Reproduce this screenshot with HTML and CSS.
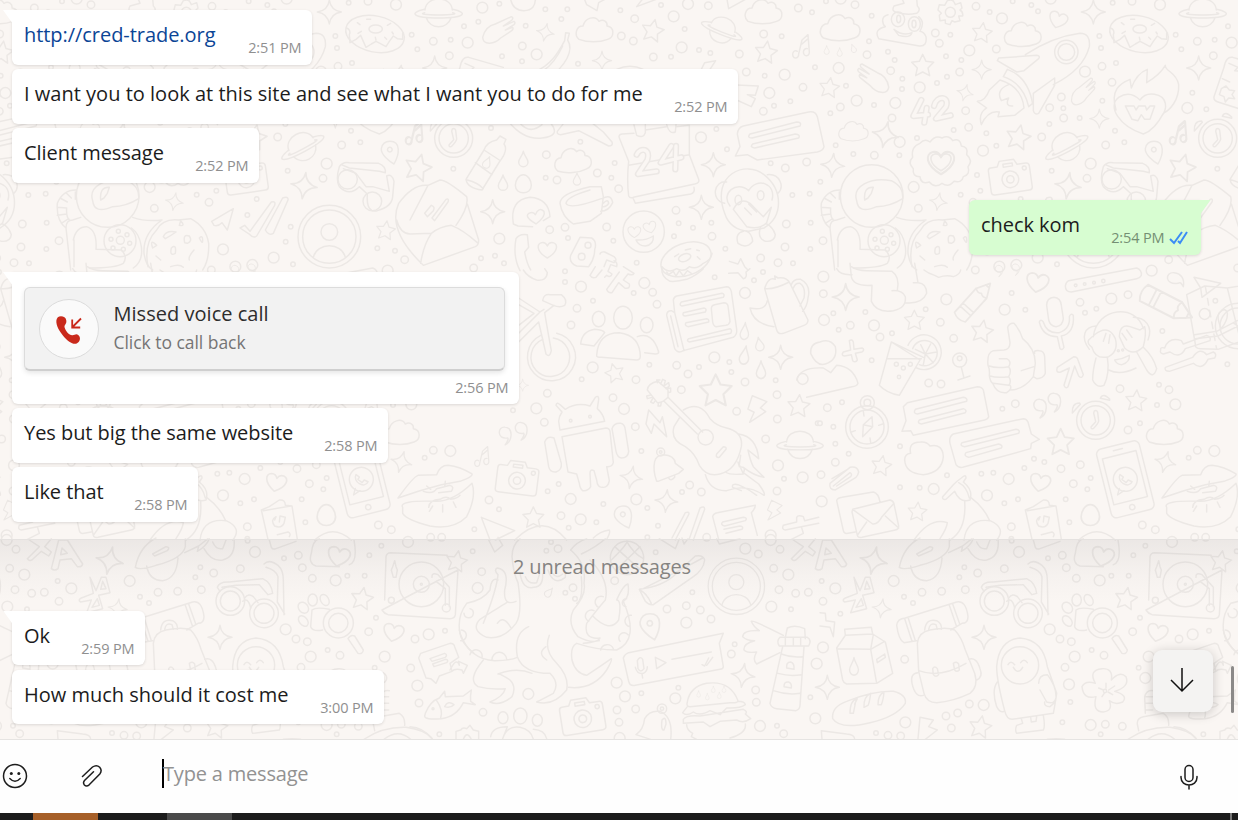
FILE: index.html
```
<!DOCTYPE html>
<html lang="en">
<head>
<meta charset="utf-8">
<title>Chat</title>
<link rel="stylesheet" href="styles.css">
</head>
<body>
<main class="chat">
<svg class="wallpaper" width="1238" height="739" viewBox="0 0 1238 739" aria-hidden="true">
<defs>
<path id="star" d="M0-35L10-14 33-11 16 6 21 29 0 18-21 29-16 6-33-11-10-14Z"/>
<path id="spark" d="M0-36Q4-5 36 0Q5 4 0 36Q-5 5-36 0Q-4-4 0-36Z"/>
<path id="cloud" d="M-46 28C-62 14-54-12-34-12C-28-36 2-46 14-26C28-34 40-24 38-12C62-8 60 22 40 28C15 38-20 38-46 28Z"/>
<path id="heart" d="M0 24C-34 4-32-18-17-22Q-5-24 0-12Q5-24 17-22C32-18 34 4 0 24Z"/>
<path id="drop" d="M0-22C3-8 14 0 14 10A14 14 0 0 1-14 10C-14 0-3-8 0-22Z"/>
<path id="egg" d="M0-28C14-28 24-10 24 4C24 34-24 34-24 4C-24-10-14-28 0-28Z"/>
<path id="saturn" d="M-41-6C-38-50 38-50 41-6M-38 16C-25 54 25 54 38 16M-42-8C-90 2-80 18 0 18S90 2 42-8M-42 2C-60 6-40 9 0 9S60 6 42 2"/>
<g id="camera"><path d="M-54-34H-34L-26-50H18L26-34H52Q62-34 62-24V38Q62 48 52 48H-52Q-62 48-62 38V-24Q-62-34-54-34ZM-16-40H12V-31H-16Z"/><circle cy="8" r="25"/><circle cy="8" r="11"/><circle cx="46" cy="-20" r="6"/></g>
<g id="clock"><circle r="57"/><circle r="44"/><path d="M-4-28Q3-32 6-24L9 2Q9 8-6 24Q-14 28-14 20L0 4-6-22ZM14-66Q22-84 42-64L42-60ZM-70-22Q-72-52-48-52L-46-48Z"/></g>
<path id="note" d="M-8 20L2-22 20-38 24 14M-8 20A9 11 0 1 1-12 12M24 12A9 11 0 1 1 18 4M2-10L18-24"/>
<path id="pin" d="M0-32C34-32 28 8 12 36C0 30-28 8-26-10Q-22-32 0-32ZM0-14A7 7 0 1 1-1-14Z"/>
<path id="bolt" d="M-20-38L26-28 10-6 28 2-14 42-6 10-26 4Z"/>
<path id="pencil" d="M-66-18H26L64 0 26 18H-66Q-78 0-66-18ZM-42-18V18M-30-18V18M26-18Q18-6 26 0Q18 8 26 18M52-6V6"/>
<path id="glove" d="M-50 18C-44-6-30-18-12-22L36-44Q44-42 38-34L12-16 44-30Q50-26 44-20L18-4 40-12Q44-6 34 0L4 20C-14 38-48 44-50 18Z"/>
<g id="profile"><circle r="94"/><circle r="80"/><circle cy="-14" r="25"/><path d="M-48 62C-36 16 36 16 48 62"/></g>
<path id="quote" d="M-8 26C0 14 4 8 0 4C-36 10-32-34-8-30C20-26 14 16-8 26Z"/>
<g id="phone"><rect x="-66" y="-106" width="132" height="212" rx="16"/><rect x="-52" y="-76" width="104" height="142"/><circle cy="86" r="8"/><circle r="36"/><path d="M-24 22L-34 40-12 32M-12-18C-28 0 2 32 18 12L8 4 0 10-10-2-4-8ZM-14-92H14"/></g>
<path id="n24" d="M680 464C690 440 724 446 712 480L684 522 740 514M784 438L752 488 814 472M798 438L796 508"/>
<path id="n42" d="M304 300L280 348 324 344M320 324L313 368M342 318C350 284 390 288 378 320L348 356 392 346"/>
<path id="rs" d="M268 11h0M406 28h0M472 28h0M454 57h0M347 77h0M631 31h0M753 15h0M824 87h0M205 65h0M162 79h0M122 119h0M276 169h0M336 184h0M504 191h0M867 150h0M901 159h0M783 170h0M1206 37h0M1115 109h0M5 104h0M22 148h0M243 384h0M511 425h0M130 506h0M407 533h0M614 489h0M604 533h0M951 448h0M919 387h0M1082 490h0M1147 585h0M1199 581h0M1202 668h0M849 683h0M792 709h0M610 722h0M474 714h0M255 767h0M213 775h0M1201 747h0M946 746h0M806 670h0M904 668h0M1064 227h0M1092 317h0M1141 304h0M1215 202h0M282 790h0M680 788h0M1149 790h0M55 278h0M97 328h0"/>
<path id="rm" d="M895 17h0M674 56h0M634 108h0M670 123h0M730 171h0M337 138h0M1061 102h0M1165 24h0M70 124h0M118 167h0M988 162h0M409 464h0M441 540h0M562 519h0M626 566h0M1009 216h0M1060 334h0M1179 262h0M1126 504h0M1190 486h0M798 631h0M590 681h0M465 682h0M419 689h0M906 709h0M1129 672h0M1125 741h0M1052 774h0M1104 788h0M191 804h0"/>
<path id="rl" d="M217 23h0M834 12h0M791 49h0M380 163h0M173 128h0M815 142h0M1124 224h0M1078 279h0M873 412h0M268 716h0M40 324h0"/>
<path id="rs2" d="M878 8h0M634 15h0M509 36h0M654 34h0M578 4h0M155 47h0M147 124h0M391 104h0M378 169h0M424 180h0M204 155h0M224 180h0M78 257h0M162 315h0M31 340h0M246 267h0M351 249h0M381 230h0M247 236h0M401 390h0M291 414h0M47 436h0M100 462h0M238 466h0M499 400h0M529 437h0M471 525h0M481 572h0M688 372h0M730 325h0M779 354h0M847 302h0M888 189h0M843 144h0M838 108h0M885 392h0M913 427h0M695 512h0M422 584h0M602 597h0M574 645h0M704 680h0M689 725h0M711 793h0M964 745h0M1017 752h0M1 545h0M18 4h0"/>
<path id="rm2" d="M105 14h0M468 19h0M936 4h0M346 99h0M358 130h0M529 147h0M141 164h0M212 212h0M419 216h0M61 321h0M216 354h0M437 332h0M446 382h0M665 411h0M731 354h0M689 323h0M724 291h0M846 199h0M876 247h0M857 435h0M801 535h0M163 466h0M295 625h0M459 607h0M1046 779h0M9 722h0"/>
<path id="rl2" d="M62-4h0M692-4h0M1020 14h0M546 55h0M448 151h0M795 215h0M56 204h0M110 302h0M226 309h0M299 262h0M239 426h0M489 452h0M281 561h0M812 491h0M501 748h0M653 773h0M538 800h0M589 795h0"/>
<path id="rs3" d="M465 4h0M465 36h0M549 92h0M671 69h0M515 328h0M718 284h0M867 291h0M958 276h0M964 306h0M1097 331h0M413 664h0M267 718h0M44 563h0M694 543h0M712 714h0M744 767h0M476 773h0M580 702h0M559 757h0M446 642h0M816 666h0M1122 626h0M914 22h0M1032 31h0M1059 6h0M309 421h0M1223 460h0M712 802h0M193 778h0M124 92h0M160 283h0"/>
<path id="rm3" d="M501 115h0M483 165h0M741 103h0M728 67h0M800 286h0M834 312h0M678 329h0M412 370h0M403 457h0M609 383h0M676 470h0M814 359h0M1005 336h0M980 424h0M1101 374h0M1102 447h0M1067 507h0M1101 663h0M839 645h0M874 666h0M453 737h0M237 690h0M70 541h0M890 802h0M62 802h0M95 802h0"/>
<path id="rl3" d="M513 50h0M703 39h0M1005 69h0M548 292h0M913 262h0M642 417h0M379 415h0M121 543h0M482 687h0M679 688h0M512 748h0M1104 586h0M1178 622h0M1178 327h0M1082 796h0M92 132h0"/>
<path id="rs4" d="M575 69h0M616 119h0M317 118h0M216 190h0M155 271h0M56 179h0M40 130h0M136 126h0M1027 183h0M829 116h0M795 128h0M547 416h0M642 566h0M673 576h0M613 594h0M520 608h0M484 611h0M240 529h0M86 551h0M46 521h0M66 397h0M240 652h0M299 653h0M381 616h0M553 700h0M594 688h0M748 757h0M812 624h0M802 658h0M737 688h0M960 460h0M1011 405h0M1017 344h0M574 806h0M40 470h0M0 460h0"/>
<path id="rm4" d="M91 166h0M180 201h0M361 157h0M401 205h0M326 339h0M363 342h0M586 401h0M780 97h0M924 74h0M900 356h0M1047 359h0M924 480h0M781 584h0M723 596h0M760 641h0M46 577h0M22 413h0M10 71h0M574 770h0M967 765h0M1006 779h0M3 614h0M466 0h0"/>
<path id="rl4" d="M379 88h0M554 119h0M162 166h0M874 86h0M12 150h0M10 20h0M566 627h0M501 676h0M341 657h0M1066 403h0M5 694h0M995 2h0"/>
<path id="rs5" d="M188 34h0M105 272h0M466 158h0M495 176h0M409 32h0M423 6h0M847 157h0M1143 208h0M974 313h0M88 583h0M694 460h0M1201 472h0M805 443h0M1101 557h0M737 37h0"/>
<path id="rm5" d="M15 297h0M215 95h0M444 26h0M489 143h0M614 122h0M771 207h0M829 197h0M871 210h0M903 237h0M964 342h0M621 510h0M627 547h0M677 507h0M219 517h0M27 489h0M1045 42h0M1091 85h0M1107 149h0M1157 160h0M1195 157h0M1110 28h0M1037 450h0M1039 487h0M1121 581h0M2 384h0"/>
<path id="rl5" d="M56 283h0M203 144h0M829 248h0M355 462h0M22 437h0M620 428h0M645 469h0M796 475h0M1006 26h0M1135 104h0M1084 200h0M1050 558h0M629 594h0M1220 371h0M1216 535h0M1082 0h0"/>
<path id="rs6" d="M433 82h0M418 112h0M684 55h0M940 46h0M976 17h0M874 107h0M926 107h0M252 170h0M279 189h0M61 221h0M815 330h0M727 547h0M751 486h0M842 583h0M168 579h0M956 383h0M960 233h0M5 123h0M575 2h0"/>
<path id="rm6" d="M473 99h0M553 86h0M727 46h0M739 83h0M769 115h0M306 157h0M365 154h0M436 149h0M720 297h0M754 305h0M852 346h0M735 382h0M856 553h0M378 528h0M413 519h0M394 564h0M448 492h0M254 358h0M9 184h0M938 275h0M204 586h0M242 588h0M907 559h0"/>
<path id="rl6" d="M597 36h0M221 123h0M46 145h0M839 121h0M689 268h0M764 350h0M747 433h0M812 555h0M256 547h0M491 495h0M976 414h0M986 350h0M1056 6h0M9 322h0"/>
<g id="tile">
<g transform="translate(410 0) scale(.33333)">
<use href="#rl" class="o3"/><use href="#rl" class="i3"/><use href="#rm" class="o2"/><use href="#rm" class="i2"/><use href="#rs" class="o1"/><use href="#rs" class="i1"/>
<use href="#saturn" x="86" y="36"/><use href="#saturn" transform="translate(937 88) rotate(22) scale(.92)"/>
<path d="M301-8Q306 32 342 32T376-8M522-6L530 14 561 32 566 8 592-6M700-6L680 20 744-4M950-8L956 26 1010-4"/>
<use href="#glove" x="268" y="94"/><use href="#spark" transform="translate(406 97) rotate(12) scale(.75)"/>
<use href="#cloud" x="553" y="90"/><use href="#cloud" x="1060" y="36"/>
<use href="#star" transform="translate(728 93) rotate(12)"/><use href="#star" transform="translate(1068 158) rotate(8)"/>
<path d="M375 214C420 198 444 160 464 122L467 98 478 100 473 120C492 150 470 196 410 240M400 212Q434 190 458 138"/>
<use href="#spark" transform="translate(576 182) scale(.8)"/><use href="#spark" x="74" y="204"/>
<use href="#note" x="1174" y="142"/>
<path d="M150 202Q156 168 176 172L280 202M150 202L120 290Q118 302 132 306L220 334M165 190L192 202 182 212 220 216M145 236l22 10M142 266l14-8 10 12 16 2-8 12 8 12-18-2-10 12-4-16-14-6z"/>
<path d="M874 208L884 188 917 182 900 208M980 255L1045 258 1036 286 1012 284 1036 296 1024 320 980 300M620 208Q660 190 700 208"/>
<use href="#clock" x="131" y="415"/><use href="#note" x="14" y="402"/>
<path d="M168 538L222 450Q230 426 260 420L270 408 288 418 282 432Q296 450 268 486L216 570Q172 564 168 538ZM196 488L246 524M222 450L268 480M172 540Q204 548 220 566"/>
<use href="#drop" transform="translate(232 486) rotate(24) scale(.8)"/><use href="#drop" x="340" y="476"/><use href="#drop" x="279" y="547"/><use href="#egg" x="340" y="552"/><use href="#drop" transform="translate(501 536) scale(.8)"/>
<path d="M297 366Q340 420 396 414T424 372M330 370Q360 404 396 374M470 358L442 394Q440 404 452 404L506 392 596 438Q610 438 606 426L580 396 548 370"/>
<use href="#cloud" transform="translate(488 482) rotate(-5)"/>
<path d="M672 375L680 406Q700 416 706 398V374M770 374Q778 404 796 396L798 374M706 390L770 380M798 380L838 376V464M672 400L636 402Q624 404 628 414L656 484Q650 540 656 588Q660 596 670 592L854 552Q870 548 866 538L838 464M656 496L838 464M670 596L676 610 842 582Q856 578 852 562"/>
<use href="#n24" class="digit-out"/><use href="#n24" class="digit-in"/>
<path d="M1000 378L1196 336Q1216 332 1222 350L1242 440Q1240 452 1222 456L1042 480 1012 464 976 468 990 440 982 402Q984 382 1000 378ZM1020 402L1160 366Q1176 366 1170 378L1026 414Q1010 414 1020 402ZM1028 432L1156 402Q1172 404 1166 414L1034 444Q1018 442 1028 432Z"/>
<use href="#spark" x="910" y="494"/><use href="#star" transform="translate(24 504) rotate(15) scale(1.2)"/>
<path d="M0 660L54 556 90 540Q110 540 170 590Q178 620 138 676M54 556Q10 550-34 610-70 690 40 796L196 740Q206 736 206 720L172 612M0 702L64 700Q90 680 124 676Q160 690 202 728M64 700Q40 736 32 790M-40 660Q-30 700 0 702M44 640L64 616Q76 620 70 632L52 650ZM66 654L108 598Q118 594 114 606L74 662Z"/>
<use href="#spark" x="248" y="635"/><use href="#spark" x="874" y="622"/>
<path d="M310 672Q298 600 360 592Q416 596 420 650L400 662M310 672L324 678 368 680M378 672Q336 646 362 638Q372 636 376 644Q386 620 402 634Q408 650 378 672Z"/>
<path d="M450 610Q450 580 540 560L574 560 580 590 574 640 540 664 490 672Q456 650 450 610ZM468 610Q470 590 540 570M468 610Q480 630 574 596M576 596Q604 580 608 608Q596 634 572 634M580 610Q594 594 596 610Q588 622 578 620"/>
<circle cx="701" cy="695" r="62"/><use href="#heart" transform="translate(673 696) scale(.7)"/><use href="#heart" transform="translate(720 682) rotate(-16) scale(.7)"/><path d="M678 720Q708 722 730 708Q732 734 706 738Q686 738 678 720Z"/>
<path d="M944 640C900 520 1010 480 1062 524C1120 570 1120 650 1062 684L1016 694Q960 690 944 640ZM944 610C900 600 912 540 950 546M1072 524C1110 520 1124 560 1104 580M960 618C930 580 980 540 1016 572C1040 530 1100 550 1086 600M970 628Q990 590 1020 610L1060 650 1084 622 1070 668Q1050 690 1010 680ZM1004 624L1024 644M1016 612L1040 636"/>
<ellipse cx="985" cy="600" rx="10" ry="14"/><ellipse cx="1052" cy="586" rx="10" ry="14"/><path d="M1000 694Q974 700 984 730Q1010 748 1028 724Q1026 700 1010 694M1052 680Q1040 714 1066 724Q1094 726 1096 704Q1088 680 1070 672"/>
<path d="M318 716Q328 700 352 704L356 742 344 756Q350 790 362 810M318 716Q308 770 330 812"/><use href="#heart" x="412" y="750"/>
<path d="M510 712L545 714Q562 724 554 750Q554 776 536 800L500 798Q476 788 482 766ZM570 762Q572 754 584 756L612 770Q624 780 612 788L590 780 582 800"/><circle cx="534" cy="736" r="9"/><circle cx="515" cy="770" r="10"/>
<ellipse cx="828" cy="778" rx="78" ry="48" transform="rotate(-20 828 778)"/><ellipse cx="824" cy="773" rx="19" ry="11" transform="rotate(-20 824 773)"/><path d="M756 800Q776 822 800 806 820 818 838 800 860 810 880 790 904 780 906 760M794 770L806 762M826 750L842 746M860 750L868 752M862 770L870 778"/>
<path d="M958 784L984 792 992 776 1004 800 1014 810"/>
</g>
<g transform="translate(820 0) scale(.33333)">
<use href="#rl2" class="o3"/><use href="#rl2" class="i3"/><use href="#rm2" class="o2"/><use href="#rm2" class="i2"/><use href="#rs2" class="o1"/><use href="#rs2" class="i1"/>
<use href="#cloud" transform="translate(60 84) scale(1.08)"/><use href="#cloud" transform="translate(608 104)"/><use href="#cloud" transform="translate(100 394) scale(.8)"/>
<use href="#drop" transform="translate(20 150) scale(.55)"/><use href="#drop" transform="translate(59 156) scale(.55)"/><use href="#drop" transform="translate(100 145) rotate(-20) scale(.55)"/>
<path d="M246-5L252 10 222 18Q212 36 234 38M204 44C178 50 190 76 196 80Q160 88 176 116L298 138Q322 140 318 110Q312 96 300 94Q316 66 296 50M292 18Q304 30 290 40Q260 46 234 38M290-4L292 18M222 88Q250 110 276 98Q270 116 236 106Z"/><ellipse cx="234" cy="58" rx="20" ry="22"/><ellipse cx="283" cy="72" rx="18" ry="22"/><ellipse cx="236" cy="57" rx="6" ry="11"/><ellipse cx="282" cy="72" rx="6" ry="11"/>
<path d="M382 2Q398-4 402 6L406 14 422 8 426 24 420 30Q430 36 428 48L416 48 420 62 404 66 396 62 390 74 376 70 376 60 360 62 358 46 364 40 354 30 358 14 374 16Z"/><circle cx="391" cy="37" r="15"/>
<use href="#star" transform="translate(486 99) rotate(8) scale(.9)"/><use href="#star" x="308" y="198"/><use href="#star" transform="translate(28 264) rotate(8) scale(.9)"/><use href="#star" transform="translate(595 413) rotate(12) scale(1.1)"/><use href="#star" transform="translate(989 692) rotate(8) scale(.85)"/>
<use href="#heart" transform="translate(714 60) rotate(18)"/><use href="#spark" x="820" y="36"/><use href="#spark" transform="translate(485 209) scale(.8)"/><use href="#spark" transform="translate(435 278) rotate(15) scale(.7)"/><use href="#spark" transform="translate(196 404) rotate(12) scale(1.1)"/><use href="#spark" transform="translate(838 356) scale(.8)"/><use href="#spark" transform="translate(744 557) rotate(8) scale(1.1)"/><use href="#spark" transform="translate(38 496) rotate(5)"/><use href="#spark" transform="translate(355 605) rotate(10) scale(.75)"/>
<ellipse cx="957" cy="102" rx="89" ry="54" transform="rotate(12 957 102)"/><ellipse cx="959" cy="87" rx="20" ry="12"/><path d="M872 84Q886 90 880 104L882 128 900 118 914 106 922 124 930 142 946 132 960 124 972 130 990 140 1000 124 1012 108 1024 116 1040 118 1040 98M904 68L912 74M906 100L916 94M932 58H944M958 112L960 120M986 112L992 118M1008 96L1012 102M1004 70L994 76"/>
<use href="#glove" transform="translate(158 239) scale(-1 1) rotate(-5)"/><use href="#glove" transform="translate(792 278) rotate(-14) scale(.85)"/>
<path d="M616 164Q700 110 780 100Q812 100 808 140Q790 210 700 254M532 182L536 174 650 166Q662 168 656 176L612 212 590 216ZM704 234L640 280V332Q644 346 656 340L704 256Z"/><circle cx="739" cy="156" r="35"/><circle cx="739" cy="156" r="25"/>
<path d="M562 208L550 230Q610 250 626 320L638 310M562 208Q624 230 638 312M540 240Q606 260 612 324L584 346 534 350 538 336Q504 330 484 374Q474 340 500 324L472 304Q496 304 508 270ZM566 254Q526 270 544 302L566 294Q554 320 578 318"/>
<use href="#n42" class="digit-out"/><use href="#n42" class="digit-in"/>
<path d="M888 330C870 270 900 250 930 238L934 264Q950 220 982 208L980 248Q1020 224 1036 196C1034 214 1070 216 1076 254C1078 300 1050 330 1030 340Q1004 390 970 402C900 380 860 320 896 292Q930 270 960 300C980 270 1030 280 1036 310Q1040 330 1024 350M916 318H942L948 330 956 318H976L980 330 990 318H1004L990 358 974 358 964 344 954 362 936 358Z"/>
<path d="M300 430Q314 414 330 426Q346 404 366 414Q386 404 398 422Q420 412 424 438Q446 440 440 464Q460 482 444 500Q452 524 430 530Q426 550 402 544Q386 564 366 550Q344 566 328 546Q302 554 300 530Q276 530 280 506Q262 488 278 472Q272 440 300 430Z"/><use href="#heart" transform="translate(363 488) scale(1.45)"/><use href="#heart" transform="translate(363 486) scale(1.1)"/>
<use href="#saturn" transform="translate(738 438) rotate(-28)"/><use href="#camera" transform="translate(570 530) rotate(-8)"/><use href="#pin" transform="translate(1002 456)"/><use href="#note" transform="translate(1074 400)"/>
<path d="M850 500Q860 484 880 488L968 490Q990 498 988 518L970 514 880 504 856 494M850 500Q838 540 850 560Q880 590 910 560L934 582Q930 640 964 632Q1008 620 1010 590L1014 544Q1008 520 992 528L1000 574 950 560 930 560 900 520 862 506"/><circle cx="875" cy="538" r="29"/><circle cx="949" cy="604" r="28"/>
<circle cx="155" cy="588" r="94"/><path d="M110 602C96 560 150 530 214 542C240 556 250 570 248 596Q210 620 170 620Q114 644 110 602ZM134 600Q130 560 160 562L154 580 144 594ZM60 570Q20 570 4 610Q0 660 30 684L44 810M30 578L46 594M12 594L34 606M4 622L32 624M4 646L32 642M16 670L38 656M58 576L58 598M32 624Q30 650 40 660M30 684Q30 660 50 660L74 652M52 720Q60 680 92 680Q124 690 120 748L196 750Q216 770 202 790 180 804 100 804M54 720V800M230 652Q270 666 318 660Q260 700 264 760Q270 800 290 810M226 684Q250 700 256 740M256 740Q262 784 232 804"/><circle cx="192" cy="722" r="48"/><circle cx="193" cy="721" r="12"/>
<path d="M302 690Q320 656 366 660L404 656Q450 680 458 730Q460 780 440 810M276 800Q262 730 302 690M322 710Q330 690 360 696Q346 706 328 716ZM374 662Q390 680 370 676ZM386 728Q380 700 400 708Q410 724 394 730ZM430 714Q440 704 440 720T430 714ZM290 744Q280 714 302 736ZM414 750Q396 770 400 780M346 744Q362 730 358 760Q340 770 346 744ZM300 768L314 780M344 800Q370 790 382 802"/>
<circle cx="165" cy="718" r="6"/><circle cx="187" cy="694" r="6"/><circle cx="213" cy="704" r="6"/><circle cx="221" cy="730" r="6"/><circle cx="171" cy="744" r="6"/><circle cx="202" cy="748" r="6"/>
<path d="M467 664L532 626 514 690 498 668Q486 680 474 676ZM552 684L566 676 582 694 646 606Q660 602 656 616L602 708Q592 716 582 704ZM628 690L680 594Q698 588 696 600L652 700Q638 708 628 690Z"/>
<use href="#profile" transform="translate(820 710)"/>
</g>
<g transform="translate(410 270) scale(.33333)">
<use href="#rl3" class="o3"/><use href="#rl3" class="i3"/><use href="#rm3" class="o2"/><use href="#rm3" class="i2"/><use href="#rs3" class="o1"/><use href="#rs3" class="i1"/>
<path d="M340 0Q354 22 380 30Q410 34 412 8L404-4M556-10L540 16Q546 26 558 22L576 0M612-28Q624-22 620-10L602-16 594 4 606 12Q602 24 590 16L584 22 M628 6L590 58Q594 70 606 68L626 38 644 54Q662 58 658 42L640 30 654 12Q668 18 672 10L640-10"/>
<path d="M398 92Q400 72 420 74L454 74Q474 90 464 106Q450 114 430 106ZM432 106L404 128Q416 200 424 242Q420 264 408 252L386 156 326 216M326 84L390 126 326 190M326 104L372 130 326 166M390 126L402 118"/><path d="M392 196A72 72 0 1 0 440 190M398 208A58 58 0 1 0 430 204"/>
<ellipse cx="566" cy="147" rx="19" ry="23"/><ellipse cx="639" cy="143" rx="28" ry="34"/><ellipse cx="710" cy="165" rx="19" ry="23"/><path d="M560 256Q564 188 628 188Q690 196 691 260Q690 270 680 270L574 262Q558 262 560 256ZM552 228L512 222Q516 184 554 178Q580 180 584 188ZM682 200Q728 184 746 246Q746 252 736 252L704 248"/>
<path d="M800 78L950 50Q960 50 964 64L980 178Q982 194 970 202L820 242Q804 252 794 236L770 136Q770 122 784 122L794 128M794 128L790 90Q792 80 800 78M794 128L822 242M782 138L804 230M814 96L936 70Q946 72 940 82L816 108Q806 106 814 96ZM820 128L882 114Q892 116 886 126L826 138Q816 138 820 128ZM828 158L890 146Q898 148 896 156L834 170Q822 166 828 158ZM836 206L960 176Q968 180 962 190L838 216Q828 212 836 206ZM914 104L942 98Q952 98 954 108L960 154Q958 164 948 166L918 170Q910 168 908 156L904 116Q904 106 914 104Z"/>
<path d="M1064 56Q1074 20 1096 28L1094 18 1104 24Q1130 20 1140 40L1194 150Q1194 162 1182 166L1120 190Q1104 194 1100 180ZM1064 56Q1090 60 1138 36M1072 92Q1066 124 1020 114Q1030 162 1092 170M1144 44Q1150 26 1172 28Q1204 44 1194 84Q1192 108 1178 124M1150 54Q1156 38 1170 40Q1188 52 1182 84L1170 108"/>
<use href="#drop" transform="translate(1004 182) rotate(5) scale(.9 1.1)"/><use href="#drop" transform="translate(1048 221) rotate(-10) scale(.9)"/><use href="#drop" transform="translate(1004 254) rotate(10) scale(1 1.2)"/><use href="#drop" transform="translate(1053 298) scale(1 1.15)"/>
<use href="#spark" transform="translate(1112 262)"/><use href="#spark" transform="translate(338 346) scale(.5)"/><use href="#spark" transform="translate(664 622) rotate(10) scale(.95)"/><use href="#spark" transform="translate(769 693) rotate(5) scale(.95)"/>
<use href="#star" transform="translate(614 310) rotate(-15) scale(.85)"/><use href="#star" transform="translate(917 364) scale(1.45)"/><use href="#star" transform="translate(1166 409) rotate(5)"/><use href="#star" transform="translate(370 744) scale(.95)"/><path d="M956 10L984 8 1000 26Q1012 24 1008 6L1020-4"/>
<path d="M446 454Q446 440 456 426L438 406Q440 394 450 404L466 418Q500 396 540 408L556 382Q566 374 566 388L562 416Q580 432 584 454L450 480ZM456 500L588 474Q598 474 600 484L610 578Q606 592 590 590L598 632Q594 654 578 652Q562 654 560 630L552 602Q540 596 540 610L542 650Q534 664 518 662Q510 656 508 640L500 612 474 606ZM404 516Q412 496 432 504L454 580Q456 600 438 606Q420 608 416 590ZM606 476Q612 458 632 460Q644 462 646 480L656 544Q654 564 634 564Q622 562 618 544Z"/><circle cx="482" cy="452" r="4"/><circle cx="540" cy="440" r="4"/>
<use href="#quote" transform="translate(293 500) scale(.95)"/><use href="#quote" transform="translate(341 486) scale(.95)"/>
<use href="#note" transform="translate(216 562) scale(.85)"/><use href="#camera" transform="translate(322 624) rotate(7)"/>
<path d="M716 420L750 458 757 440 770 500 732 462 724 490 708 462Z"/><use href="#bolt" transform="translate(1040 418) rotate(10)"/><use href="#bolt" transform="translate(1092 722) rotate(15) scale(.75)"/>
<path d="M712 360Q714 340 744 334L774 360V382Q756 400 742 398ZM742 338L740 330 750 330M752 342L758 328 766 332 762 348 776 338 778 348 768 356 782 354 782 366 774 368M720 376L710 378 712 386 726 382M728 386L722 396 730 400 736 392M746 398L744 408 752 408 754 396M774 382L878 486M762 394L862 492M820 420Q870 390 900 446Q920 468 950 474Q1000 486 994 530Q980 600 930 612Q890 622 868 586Q856 550 826 530Q780 510 792 470L808 444M886 614Q900 664 950 662Q1010 640 1062 676Q1068 672 1046 642L1000 608Q1010 590 988 590L984 576M986 492Q1040 500 1046 566L1014 540Q1020 570 1030 590L1062 622Q1030 616 1000 592M946 606Q960 616 1000 612L988 584 992 556M994 662L968 652Q964 640 984 644Q1010 654 1040 676M920 552L940 530Q950 530 948 538L928 562Q916 564 920 552Z"/><circle cx="887" cy="502" r="23"/>
<path d="M740 634Q728 600 734 574Q738 556 760 554Q794 556 796 580L820 598 806 610 744 634ZM776 624Q782 636 794 622L794 616"/><circle cx="752" cy="546" r="12"/><circle cx="752" cy="546" r="4"/>
<use href="#saturn" transform="translate(1170 522) scale(.98)"/>
<path d="M-36 684Q10 620 24 616L80 614Q90 586 114 586Q150 590 186 612Q190 620 150 634L94 644Q30 660-36 684ZM-22 712Q-36 690 80 694Q130 694 186 640Q200 680 170 740Q130 780 60 768Q-10 750-22 730ZM40 664Q70 674 80 656L120 646Q134 650 124 664L86 668M56 712Q58 690 90 688Q110 676 122 688Q142 686 150 676M50 648L62 658M106 634L104 650M68 708L58 724M98 704V726M130 696L138 712"/>
<path d="M38 74L92 48 160 54 230 42M38 74L64 222Q62 236 80 236L132 238 240 200Q250 190 246 180L226 60M62 194L128 184 240 126M64 206L132 198 242 144M160 54L196 198M180 160L240 200M142 176Q126 140 136 128Q154 110 160 130Q162 150 142 176Z"/><path class="dash" d="M94 50L128 238"/>
<use href="#pin" transform="translate(640 740) rotate(-8)"/>
<path d="M214 742L314 782 256 810M214 742L240 810M314 810Q400 724 470 810M550 804Q570 784 598 780Q602 788 590 808M786 804L826 728Q840 724 836 734L796 810M838 806L870 714Q884 706 884 718L850 810M908 740Q910 730 922 728L1036 706Q1036 716 1024 728L1042 796M908 740L926 808M938 756L1000 742Q1014 744 1006 752L944 768Q930 764 938 756ZM942 778L990 768Q1002 770 996 778L948 790M1120 766L1160 756 1160 742Q1164 734 1180 740L1184 752 1226 742M1120 766Q1114 778 1126 780L1174 770 1180 790 1144 808M1174 770L1226 760"/>
<path d="M756-8Q752 20 780 34Q800 36 830 28 860 16 880-4M770 6L776 14 790 4 798 18 808 2 820 18 832 2 844 10"/>
<path d="M60 22L140 40 84 82 80 54Z"/><circle cx="192" cy="168" r="68"/><circle cx="192" cy="168" r="54"/>
</g>
<g transform="translate(820 270) scale(.33333)">
<use href="#rl4" class="o3"/><use href="#rl4" class="i3"/><use href="#rm4" class="o2"/><use href="#rm4" class="i2"/><use href="#rs4" class="o1"/><use href="#rs4" class="i1"/>
<path d="M90-20L94 20Q100 50 156 46L154 94Q170 130 220 122Q260 114 256 80Q248 60 216 62M232 60Q240 20 216 4L140 2Q110 2 94-10M284-20L294 38Q320 40 320 70Q306 104 254 98M280 38H294M50-4Q60 16 96 14M312 0Q324 10 344 16L356 22Q380 14 400 20 420 14 422 0"/>
<use href="#spark" transform="translate(77 81) scale(1.12)"/><path d="M88 212Q96 206 100 216L102 238 126 234Q136 238 126 246L106 250 112 270Q106 280 98 272L94 254 74 258Q62 256 70 246L92 240Z"/>
<use href="#star" transform="translate(283 152) scale(.9)"/><use href="#star" transform="translate(486 185) rotate(10)"/><use href="#star" transform="translate(184 588) rotate(10) scale(.9)"/><use href="#star" transform="translate(292 726) rotate(5) scale(.85)"/><use href="#star" transform="translate(722 518) scale(1.2)"/><use href="#star" transform="translate(948 393) rotate(5) scale(.95)"/>
<use href="#pencil" transform="translate(466 90) rotate(-48) scale(1.05 1.2)"/><use href="#pencil" transform="translate(1045 106) rotate(27) scale(1.25 1.5)"/>
<path d="M0 216Q30 204 46 230Q54 270 16 282Q-10 290-28 250Q-30 220 0 216ZM-70 330Q-60 290 10 294L32 308 50 286Q100 290 114 340Q110 350 96 350L-40 382"/>
<path d="M214 216L178 346Q200 370 238 376L300 270ZM214 216L310 262M200 266H304M264 226A52 52 0 1 1 290 294M278 236A38 38 0 1 1 298 284M316 252L302 224M316 252L332 222M316 252L350 246M316 252L340 278M316 252L310 284M316 252L286 238"/><circle cx="229" cy="283" r="6"/><circle cx="250" cy="294" r="6"/><circle cx="271" cy="283" r="6"/><circle cx="237" cy="321" r="5"/>
<circle cx="419" cy="270" r="21"/><circle cx="419" cy="265" r="7"/><path d="M424 292L432 324M414 330L450 318"/>
<path d="M563 172Q568 158 582 160Q600 180 608 206Q646 236 646 280L640 320Q610 360 570 360M563 172L570 218Q570 238 552 240L520 242Q500 248 504 286Q510 300 508 316Q510 334 518 340Q530 372 560 368Q578 356 570 346M538 266H560Q576 274 566 290 528 296 508 288M566 290Q576 302 566 320 530 324 510 318M566 320Q576 334 566 346L520 340M604 302L642 290M644 250Q640 240 658 242Q672 242 674 260L676 310Q670 326 650 326L640 320"/>
<path d="M680 106Q680 84 702 82Q722 84 724 106L730 146Q728 168 708 170Q690 168 686 150ZM658 156Q662 146 670 156Q680 192 718 188Q752 176 748 140Q752 128 760 136Q764 190 724 198L732 232Q728 242 720 236L712 200Q668 200 658 156Z"/>
<path d="M712 292L762 260Q772 260 774 270L790 314Q786 328 776 318L764 288 744 350Q736 358 732 346L748 294 722 306Q706 310 712 292Z"/>
<path d="M820 200C830 110 950 100 970 176M940 142C976 142 1000 170 984 210M828 168C794 170 780 200 808 238M806 210Q826 190 840 184Q870 170 886 206Q896 244 866 260Q826 270 816 232Q800 220 806 210ZM850 214L858 190M866 220L870 194M898 200Q900 160 930 170L960 180 974 170Q980 190 970 230Q940 260 914 234ZM920 180L936 202M906 190L920 210M828 264Q818 300 818 330Q830 356 852 346Q870 310 862 262M866 300Q900 318 948 294M950 246L980 300Q1000 330 1010 296Q1000 260 970 232M884 270Q906 268 928 256Q930 276 906 284Q890 284 884 270Z"/><circle cx="895" cy="242" r="3"/><circle cx="908" cy="240" r="3"/>
<path d="M746 32L950-6Q966 0 964 16Q960 24 950 26L754 66Q736 66 736 48Q738 36 746 32Z"/><circle cx="767" cy="46" r="4"/><circle cx="794" cy="42" r="4"/><circle cx="822" cy="38" r="4"/><circle cx="850" cy="33" r="5"/><use href="#heart" transform="translate(652 38) rotate(10) scale(1.2)"/><use href="#quote" transform="translate(542 4) scale(.6)"/><use href="#quote" transform="translate(592 0) scale(.6)"/><path d="M1090 50C1084 38 1080 36 1074 40C1034 46 1034 6 1062 8C1086 10 1094 30 1090 50Z"/>
<path d="M1022 240Q1020 230 1034 234Q1046 200 1084 212L1090 222 1160 196Q1174 200 1170 212L1096 236Q1080 268 1050 246L1030 252Q1018 250 1022 240ZM1036 292L1118 262Q1140 230 1160 254L1180 246Q1192 252 1184 264L1164 268Q1146 304 1120 280L1048 304Q1032 304 1036 292Z"/>
<circle cx="141" cy="471" r="64"/><circle cx="141" cy="471" r="51"/><circle cx="142" cy="398" r="21"/><circle cx="142" cy="398" r="10"/><path d="M156 440L158 470 128 500 130 464ZM130 464L158 470M130 424L132 438M150 504L152 518M94 486L106 482M176 466L188 462"/>
<path d="M262 398L472 350Q486 350 490 360L506 440Q504 448 494 450L280 496 272 482 246 484 258 452 250 410ZM286 418L430 382Q444 384 440 394L292 432Q278 430 286 418ZM298 450L430 416Q442 420 436 428L304 462Q290 460 298 450Z"/>
<path d="M400 492L610 446Q620 446 624 456L634 492 658 508 634 520 632 536 428 592Q414 594 408 584L390 520Q386 500 400 492ZM426 518L588 478Q602 480 596 490L434 530Q418 528 426 518ZM438 548L536 522Q550 526 544 534L446 562Q430 558 438 548Z"/>
<use href="#quote" transform="translate(668 418)"/><use href="#quote" transform="translate(711 400)"/><use href="#clock" transform="translate(827 451)"/>
<path d="M272 550Q264 516 302 516Q320 514 330 528Q368 520 370 560Q366 608 310 614Q256 610 254 570Q254 552 272 550Z"/><use href="#cloud" transform="translate(1034 488)"/><use href="#heart" transform="translate(660 638) rotate(12) scale(1.1)"/><use href="#egg" transform="translate(811 736) scale(1.15)"/>
<path d="M30 640L90 592Q112 588 116 606Q114 616 108 622L46 660Q26 660 30 640ZM40 648L90 608Q98 612 92 620L50 648M36 626L80 600"/>
<path d="M50 692Q52 684 66 682L160 666Q176 670 180 696M50 692L70 782Q72 792 84 790L106 786M98 718L210 690Q220 692 222 702L236 768Q236 778 226 780L126 802Q114 804 112 796L96 726ZM98 718L158 762Q174 764 186 740L222 700M112 796L140 756M236 774L196 738"/>
<use href="#phone" transform="translate(916 628) rotate(-14)"/><use href="#spark" transform="translate(1036 576) rotate(15) scale(.9)"/>
<path d="M368 680L400 644Q410 634 424 624Q438 610 438 624L430 636Q460 660 450 690Q420 700 404 664L378 688Q366 690 368 680ZM416 638Q440 650 448 684M434 694Q440 780 390 810M452 682Q490 710 508 750M282 810Q330 740 382 758Q380 776 360 806M432 810Q440 744 510 752Q560 774 530 810M616 720L640 710 670 690Q688 688 688 706L708 708 724 808M616 720L636 808M622 722L704 708M656 750L660 740Q642 750 656 768Q676 776 684 760L688 742 672 738 670 756M664 794L696 786Q706 790 700 800M776 810Q830 760 886 810"/>
</g>
<g transform="translate(410 540) scale(.33333)">
<use href="#rl5" class="o3"/><use href="#rl5" class="i3"/><use href="#rm5" class="o2"/><use href="#rm5" class="i2"/><use href="#rs5" class="o1"/><use href="#rs5" class="i1"/>
<path d="M-76 180L-72 50Q-70 38-58 38L112 46M144 90L136 224Q134 236 120 236L-66 224Q-78 220-84 210ZM-46 62L-42 80-38 90-42 112-50 112-56 90-52 80ZM66 112Q64 96 84 104L118 142V200M78 124L106 146V196"/><circle cx="34" cy="133" r="67"/><circle cx="34" cy="133" r="24"/><circle cx="34" cy="133" r="3"/><circle cx="109" cy="204" r="12"/><circle cx="-56" cy="181" r="9"/><use href="#star" transform="translate(140 65) rotate(10) scale(.95)"/>
<path d="M236 0L254 36 278 16 264-8M306 50Q306 16 330-4M306 50Q310 100 324 128Q338 220 318 250Q280 300 230 292Q180 270 210 238Q270 200 290 188M318 184Q280 200 284 150Q300 90 262 84Q250 90 264 104Q260 150 220 250M264 120Q244 110 240 150Q220 180 170 190Q140 230 150 280Q180 360 254 362Q300 362 322 352M482 30Q530 70 522 130 530 164 490 210Q470 250 504 290Q540 310 568 302M514 110Q520 180 500 190M540 60Q600 120 586 180Q560 210 530 250Q520 300 570 294Q566 306 520 310M548 228Q600 280 626 240Q636 180 620 180Q640 134 654 132Q660 170 640 184Q690 300 620 330Q560 330 500 310Q480 320 486 360Q496 400 530 406Q570 380 604 356Q608 360 590 390Q550 450 476 442M356 260Q310 280 322 350Q340 400 420 400Q450 430 430 460 400 476 380 486Q430 500 470 450Q478 410 440 370Q400 330 418 286M220 360Q170 420 204 440Q240 450 286 446Q280 470 240 486Q270 500 306 470Q320 440 300 420 270 400 264 402Q320 380 366 400M162 220A14 14 0 1 0 180 206M152 302A15 15 0 1 0 154 270M180 344A18 18 0 0 1 216 352M246 360A22 22 0 0 1 290 358M572 330A20 20 0 0 1 610 326M630 304A14 14 0 0 1 654 284M660 260A15 15 0 0 1 664 226M648 200A12 12 0 0 1 650 176M536 244A15 15 0 0 1 552 212M566 202A15 15 0 0 1 580 170M262 250Q280 224 302 262M410 360Q380 340 408 320"/>
<path d="M330 100Q338 150 372 142Q400 140 398 102M346 110Q356 134 380 128L388 104M414 90Q430 140 466 112V94M428 100Q440 118 458 102M482 30Q500 6 530-4M514 42Q560 20 586-4"/><circle cx="651" cy="54" r="50"/><path d="M614 20L690 88M690 20L616 92M604 60Q646 20 652 4M650 4Q670 40 700 56M626 90Q644 70 660 104"/>
<use href="#drop" transform="translate(418 156) rotate(40) scale(.7)"/>
<path d="M688 148Q760 140 800 100L856 48Q880 44 884 60Q880 90 850 110L730 194Q716 196 706 184ZM690 150Q710 160 724 190M700 146L826 82 878 54"/>
<g transform="translate(979 139) scale(.9)"><use href="#profile"/></g><use href="#pin" transform="translate(720 258) scale(1.15)"/>
<path d="M1024 244Q1030 240 1120 286M1024 244Q1030 260 1048 272Q1000 270 998 290Q1010 302 1034 302Q1000 310 1002 330Q1012 340 1040 336Q1026 360 1040 372L1110 338"/>
<path d="M1126 292L1132 264Q1154 252 1184 266L1186 296M1110 292H1192Q1206 300 1196 318H1108Q1098 304 1110 292ZM1126 292V318M1150 294V318M1172 294V318M1118 320L1080 490Q1084 504 1100 506L1158 512Q1170 508 1170 496L1182 320M1114 342Q1144 354 1178 350M1104 400Q1140 410 1174 404M1090 452Q1130 466 1170 460M1130 384Q1128 366 1142 366Q1154 370 1152 388ZM1122 440Q1122 424 1136 426Q1146 430 1144 444Z"/>
<path d="M656 338L940 280 928 310 940 380Q940 386 930 388L676 436Q660 440 656 424L640 354Q644 342 656 338ZM682 362Q690 346 698 358L702 386Q692 400 684 386ZM676 382Q682 404 700 400Q712 394 712 380M696 402L698 414M736 352L768 368 740 386ZM786 358L904 336M876 374L884 378 896 354M890 376L908 352"/>
<use href="#spark" transform="translate(999 406) rotate(8)"/><path d="M32 340L120 310Q132 310 134 320L146 352 120 370 126 394 88 408 78 430 62 416 48 414 26 354ZM60 356L104 340Q114 344 106 352L66 364ZM68 372L106 358Q118 360 110 368L72 380ZM120 390Q140 350 148 376L146 364 172 376 160 400 156 390Q134 384 126 394"/>
<path d="M46 520Q60 484 88 474L104 454 106 470 160 468 184 450Q180 470 182 484L196 494 160 488Q140 530 94 536Q44 540 44 528ZM80 482Q100 510 92 534M104 500Q114 480 132 494 120 506 104 500Z"/><circle cx="69" cy="506" r="3"/>
<use href="#camera" transform="translate(517 528) rotate(-9) scale(1.05)"/>
<ellipse cx="279" cy="533" rx="15" ry="18"/><ellipse cx="331" cy="528" rx="20" ry="24"/><ellipse cx="382" cy="541" rx="15" ry="18"/><path d="M242 590Q246 560 292 560L278 596M278 596Q290 556 330 562Q364 570 370 598M370 568Q404 570 410 596M138 596L138 574 152 570Q158 560 170 566L180 556 190 570 206 574 206 598M160 598Q170 570 184 598M0 560Q40 562 66 596"/>
<path d="M678 584Q700 570 704 536Q718 510 750 514Q790 530 782 598M678 584L722 598M756 540Q768 526 768 552L762 570Q752 572 756 540Z"/><circle cx="756" cy="506" r="14"/><circle cx="756" cy="506" r="5"/>
<path d="M832 486Q840 440 890 430Q960 420 984 482Q984 490 960 488L840 500Q828 500 832 486ZM832 500L818 518Q830 530 850 516Q870 530 900 512L930 524 950 504Q990 506 1006 494 1004 484 984 484M820 538Q830 524 870 528L1000 508Q1014 514 1006 522L1022 536Q1000 552 980 540L930 544 900 560 880 546 820 550ZM830 554Q830 570 848 580L844 590 860 598M1006 552Q1010 580 960 594"/><use href="#drop" transform="translate(866 462) scale(.4)"/><use href="#drop" transform="translate(892 470) scale(.4)"/><use href="#drop" transform="translate(910 448) scale(.4)"/><use href="#drop" transform="translate(928 466) scale(.4)"/><use href="#drop" transform="translate(942 448) scale(.4)"/>
<path d="M748-4L796 26 808-4M816-6L822 12 834-4M920-4L928 12 990-4M1150 0L1180 20 1144 56Q1150 66 1160 58L1186 34 1208 48 1216 36 1196 20 1216-4"/>
</g>
<g transform="translate(820 540) scale(.33333)">
<use href="#rl6" class="o3"/><use href="#rl6" class="i3"/><use href="#rm6" class="o2"/><use href="#rm6" class="i2"/><use href="#rs6" class="o1"/><use href="#rs6" class="i1"/>
<path d="M-14 86L8 0 34 0 80 72Q78 82 64 80L46 56 12 60 6 86Q-4 94-14 86ZM18 24L34 40 14 44Z"/>
<use href="#spark" transform="translate(161 62) rotate(12) scale(1.15)"/><use href="#spark" transform="translate(185 205) rotate(8) scale(.8)"/><use href="#spark" transform="translate(492 292)"/><use href="#spark" transform="translate(22 442)"/>
<path d="M238 82Q250 20 300-6M238 82Q250 92 300 76Q380 56 388 20V-4M290 42L330 20Q344 20 334 32L296 48ZM272 78Q280 122 320 122Q362 116 366 54M386 38L428 18 456-4M428 18L424 34Q450 20 460-4M444 26Q466 66 500 60Q540 50 534-4M470 6Q480 30 500 26L510 0M640 0L646 22Q650 30 660 26L720 4M766 40Q770 0 790-4M766 40Q756 70 780 78L850 80M894 0Q906 66 880 74"/><use href="#heart" transform="translate(848 50) rotate(12) scale(1.2)"/>
<path d="M102 112L120 152 136 112H150L162 158 128 166 140 206 92 218 106 180 74 186Q64 180 76 174L112 160ZM140 124L150 146 134 148ZM124 176L130 196 108 202Z"/>
<path d="M484 142Q490 124 520 126L620 116Q646 128 650 160L636 164 610 134 540 136 498 142M624 72Q640 56 666 76Q682 90 682 120L684 224M630 82Q660 90 666 110L664 186M484 142L492 154M566 174Q578 158 592 170L606 188M560 184Q576 170 584 204M664 186L686 222"/><circle cx="523" cy="183" r="43"/><circle cx="523" cy="183" r="30"/><circle cx="624" cy="220" r="43"/><circle cx="624" cy="220" r="30"/>
<path d="M0 218L16 220 18 242 44 246 40 290 30 262 0 258"/>
<ellipse cx="770" cy="180" rx="14" ry="18"/><ellipse cx="806" cy="180" rx="12" ry="18" transform="rotate(-30 806 180)"/><ellipse cx="742" cy="203" rx="14" ry="18" transform="rotate(-40 742 203)"/><ellipse cx="742" cy="243" rx="12" ry="18" transform="rotate(-40 742 243)"/><path d="M820 208Q780 200 768 210L764 260Q770 276 800 270M876 296Q884 282 896 288L922 330Q920 344 906 340Z"/><circle cx="847" cy="249" r="45"/><circle cx="847" cy="249" r="29"/>
<use href="#star" transform="translate(918 177) rotate(10)"/><use href="#star" transform="translate(481 562) rotate(10)"/><use href="#heart" transform="translate(1012 278) rotate(12) scale(1.1)"/>
<path d="M50 324L76 286 74 268 154 262 158 282 196 306 218 400 170 430 80 432Q70 428 68 420ZM50 326L152 328 194 304M152 328L170 430M76 286L158 282M152 328L160 284M170 358L194 342 196 352 172 368Z"/><use href="#drop" transform="translate(102 378) scale(.95 1.15)"/>
<path d="M230 256Q232 236 256 234L410 186Q438 180 444 230Q444 250 426 250L392 270M230 256Q236 300 252 308L290 302M254 236L276 304M264 232L286 302M388 196L410 260M398 192L420 254M314 270Q318 234 350 242Q366 250 364 268M326 268Q330 246 348 254L352 268M292 310Q296 276 330 270Q380 260 404 270Q424 290 436 330L464 400Q476 440 450 460Q400 484 350 488Q320 488 312 460L296 394ZM296 392Q360 416 438 370M338 386Q344 376 352 386L356 404Q348 414 340 404ZM400 370Q410 362 416 372L418 390Q410 398 404 390ZM446 358Q470 350 480 386Q490 410 470 420M294 398Q270 400 276 430Q286 474 310 466"/>
<path d="M38 536Q34 500 80 484Q160 452 220 454Q260 464 256 490Q230 530 150 548Q60 570 38 536ZM90 520Q90 480 112 476Q100 500 106 490L100 520 90 520ZM132 502Q130 470 152 460Q148 490 144 496ZM174 494Q174 464 192 456Q190 480 184 494Z"/>
<path d="M554 512Q530 420 530 380Q536 300 600 294Q670 300 682 380L710 460Q704 500 700 520L576 538Q560 538 554 512ZM532 426Q514 450 530 500Q540 520 552 514M656 430Q656 404 682 404Q710 440 708 474Q704 494 680 486L660 450M674 486Q672 500 690 500L706 486M604 536L608 550 590 556Q584 570 590 580L670 570Q676 560 670 526M632 532L634 546 648 544 650 530M564 374Q572 360 584 374M602 368Q612 354 622 368M580 382Q594 406 608 382"/><circle cx="600" cy="376" r="56"/>
<path d="M826 430Q804 390 846 386Q880 384 874 420Q900 392 918 410Q930 440 884 454Q926 466 908 486Q886 496 868 482Q880 512 850 516Q816 516 828 470Q790 480 786 440Q796 420 826 430ZM836 444L850 450M858 430V444M884 438L866 450M878 464L864 456M846 470L854 458M850 453a5 5 0 1 1 10 0a5 5 0 1 1-10 0"/>
<path d="M976 520L974 470Q980 448 1000 452M974 470H998M976 490H998M976 510H998M952 552Q950 534 970 530L1030 520Q1048 530 1046 556M956 572L952 552M924 598Q980 560 1050 562Q1110 570 1130 598M984 598Q1026 564 1064 598M300 532L340 540 326 560 352 570 316 598M300 532L294 596M4 572L6 598M4 572L80 582Q104 584 104 598M682 598Q710 594 734 598"/>
<path d="M1210 270Q1214 310 1254 340"/>
</g>
</g>
</defs>
<use href="#tile" x="-764"/><use href="#tile"/><use href="#tile" x="764"/>
</svg>
<div class="row first"><div class="bubble tail-left w300"><a class="text t1">http://cred-trade.org</a><time>2:51 PM</time></div></div>
<div class="row"><div class="bubble w726"><span class="text t2">I want you to look at this site and see what I want you to do for me</span><time>2:52 PM</time></div></div>
<div class="row"><div class="bubble w247"><span class="text t3">Client message</span><time>2:52 PM</time></div></div>
<div class="row sent"><div class="bubble green tail-right w232"><span class="text t4">check kom</span><time>2:54 PM</time><svg class="ticks" width="19" height="14" viewBox="0 0 19 14"><path d="M1 8l4 4L13 1M9 10l2 2L18 1"/></svg></div></div>
<div class="row turn"><div class="bubble call tail-left">
<div class="call-card"><div class="call-icon"><svg width="59" height="59" viewBox="0 0 59 59"><path class="handset" d="M22 17.200c2.500 0 5 1.300 5.300 4.200.5 4.300-2.600 4-1.600 7.300 1 3.400 4.200 7.200 7.500 7.500 2.600.2 3.800-2.200 6.300 0 2.800 2.500 1.300 6.800-1.800 8.200-3.700 1.600-9-2.500-12.600-6.500-4-4.500-8.400-11.200-7.700-16.600.3-2.500 2-4.100 4.600-4.100z"/><path class="arrow" d="M42 19.500l-8.500 8.500M33.200 20.500v8h8"/></svg></div>
<div class="call-copy"><div class="call-title">Missed voice call</div><div class="call-sub">Click to call back</div></div></div>
<time>2:56 PM</time></div></div>
<div class="row"><div class="bubble w376"><span class="text t5">Yes but big the same website</span><time>2:58 PM</time></div></div>
<div class="row"><div class="bubble w186"><span class="text t6">Like that</span><time>2:58 PM</time></div></div>
<div class="unread"><span>2 unread messages</span></div>
<div class="row after"><div class="bubble tail-left w133"><span class="text t7">Ok</span><time>2:59 PM</time></div></div>
<div class="row"><div class="bubble w372"><span class="text t8">How much should it cost me</span><time>3:00 PM</time></div></div>
<button class="jump" aria-label="Scroll down"><svg width="26" height="28" viewBox="0 0 26 28"><path d="M13 2v23M2 14l11 11 11-11"/></svg></button>
<div class="scrollbar"></div>
</main>
<footer class="composer">
<svg class="emoji" width="26" height="26" viewBox="0 0 26 26"><circle cx="13" cy="13" r="11.500"/><path d="M7.800 15.500q5.200 5.500 10.400 0"/><circle class="eye" cx="9.300" cy="10.500" r="1.500"/><circle class="eye" cx="16.800" cy="10.500" r="1.500"/></svg>
<svg class="clip" width="22" height="24" viewBox="0 0 22 24"><path d="M1.500 12.500L11.500 3Q15.500.2 18.700 3.200 21.500 6.500 18.800 10L8.200 20.800Q5.500 23 3.400 21 1.600 18.800 3.500 16.500L12.500 7.800"/></svg>
<div class="field"><span class="caret"></span><span class="hint">Type a message</span></div>
<svg class="mic" width="20" height="26" viewBox="0 0 20 26"><rect x="6" y="1.500" width="8" height="16" rx="4"/><path d="M2 12.500v1c0 10 16 10 16 0v-1M10 21v4"/></svg>
</footer>
<div class="taskbar"><span class="task orange"></span><span class="task gray"></span><span class="peek"></span></div>
</body>
</html>
```
FILE: styles.css
```
* { box-sizing: border-box; }
body { margin: 0; width: 1238px; height: 820px; overflow: hidden; display: flex; flex-direction: column; font-family: "Open Sans", "Noto Sans", sans-serif; background: #fff; color: #1c1c1c; }
.chat { position: relative; height: 740px; flex: none; background: #faf6f3; border-bottom: 1px solid #e6e4e2; display: flex; flex-direction: column; overflow: hidden; }
.wallpaper { position: absolute; left: 0; top: 0; fill: none; stroke: #ece8e5; stroke-width: 4.400; stroke-linejoin: round; stroke-linecap: round; }
.wallpaper .o1 { stroke-width: 18; }
.wallpaper .i1 { stroke-width: 9; stroke: #faf6f3; }
.wallpaper .o2 { stroke-width: 27; }
.wallpaper .i2 { stroke-width: 18; stroke: #faf6f3; }
.wallpaper .o3 { stroke-width: 37; }
.wallpaper .i3 { stroke-width: 28; stroke: #faf6f3; }
.wallpaper .digit-out { stroke-width: 19; }
.wallpaper .digit-in { stroke-width: 10; stroke: #faf6f3; }
.wallpaper .dash { stroke-dasharray: 20 16; }
.row { display: flex; padding-left: 12px; margin-bottom: 4.500px; position: relative; }
.first { padding-top: 10px; }
.sent { justify-content: flex-end; padding: 0 37.500px 0 0; margin-top: 13px; }
.turn { margin-top: 13px; }
.bubble { position: relative; height: 54.500px; background: #fff; border-radius: 6px; box-shadow: 0 1px 3px rgba(0,0,0,.12); padding: 9px 10px 0 12px; display: flex; justify-content: space-between; }
.text { font-size: 20px; line-height: 32px; white-space: nowrap; color: #1c1c1c; }
a.text { color: #0b4596; }
.t2 { letter-spacing: .015px; }
.t1, .t3, .t4, .t5, .t6 { letter-spacing: -.05px; }
time { font-size: 14.500px; line-height: 20px; color: #8f8f8f; white-space: nowrap; margin-top: 19px; letter-spacing: -.12px; }
.tail-left::before, .tail-right::after { content: ""; position: absolute; top: 0; width: 10px; height: 14px; background: inherit; }
.tail-left { border-top-left-radius: 0; }
.tail-left::before { left: -9px; clip-path: polygon(0 0, 100% 0, 100% 100%); }
.tail-right { border-top-right-radius: 0; }
.tail-right::after { right: -10px; clip-path: polygon(0 0, 100% 0, 0 100%); }
.green { background: #d7fdd1; }
.green time { margin-left: auto; color: #748f73; }
.ticks { fill: none; stroke: #3b8cf5; stroke-width: 2; margin: 22px 3px 0 4px; }
.w300 { width: 299.500px; }
.w726 { width: 725.500px; }
.w247 { width: 246.500px; }
.w232 { width: 231.500px; }
.w376 { width: 375.500px; }
.w186 { width: 185.500px; }
.w133 { width: 132.500px; }
.w372 { width: 371.500px; }
.call { width: 506.500px; height: 131.500px; padding: 15px 10px 0 12px; flex-direction: column; justify-content: flex-start; align-items: flex-end; }
.call-card { width: 481px; height: 84px; margin-right: 4px; background: #f2f2f2; border: 1px solid #dcdcdc; border-bottom: 2px solid #cfcfcf; border-radius: 6px; display: flex; padding: 11px 0 0 14px; box-shadow: 0 2px 5px rgba(0,0,0,.1); }
.call time { margin-top: 7px; }
.call-icon { width: 60px; height: 60px; border: 1.500px solid #dcdcdc; border-radius: 50%; background: #fafafa; flex: none; }
.call-icon svg { display: block; margin: -1px; }
.handset { fill: #c9291b; }
.arrow { fill: none; stroke: #c9291b; stroke-width: 1.800; }
.call-copy { margin-left: 15px; white-space: nowrap; }
.call-title { font-size: 20px; line-height: 29px; color: #2d2d2d; letter-spacing: .03px; }
.call-sub { font-size: 17.500px; line-height: 28px; color: #757575; letter-spacing: -.04px; }
.unread { position: relative; height: 71.500px; margin-top: 13px; border-top: 1px solid #e5e2e0; background: linear-gradient(rgba(70,65,70,.08), rgba(70,65,70,.025) 50%, transparent 88%); padding: 12px 0 0 513px; font-size: 20px; line-height: 30px; color: #858381; letter-spacing: -.16px; }
.jump { position: absolute; left: 1153px; top: 650px; width: 60px; height: 62px; padding: 0; border: 0; border-radius: 9px; background: #f4f3f2; box-shadow: 0 2px 12px rgba(0,0,0,.2); display: flex; align-items: center; justify-content: center; }
.jump svg { fill: none; stroke: #111; stroke-width: 1.500; margin: -3px 2px 0 0; }
.scrollbar { position: absolute; left: 1231px; top: 666px; width: 3px; height: 47px; border-radius: 2px; background: #8b8988; }
.composer { height: 73px; flex: none; display: flex; align-items: flex-start; padding: 19px 39px 0 2px; background: #fefefe; }
.composer svg { fill: none; stroke: #1d1d1d; stroke-width: 1.500; stroke-linecap: round; flex: none; }
.composer .emoji { margin-top: 4px; }
.composer .eye { fill: #1d1d1d; stroke: none; }
.composer .clip { margin: 5px 0 0 53px; }
.field { display: flex; margin-left: 59px; flex: 1; }
.caret { width: 2px; height: 29px; background: #000; margin-right: -1px; }
.hint { font-size: 20px; line-height: 30px; color: #929292; white-space: nowrap; letter-spacing: -.19px; }
.composer .mic { margin-top: 5px; }
.taskbar { height: 7px; flex: none; background: #1c1c1c; display: flex; }
.task { width: 65px; height: 7px; }
.orange { margin-left: 33px; background: #a65f28; }
.gray { margin-left: 69px; background: #4a4a4a; }
.peek { width: 2px; margin-left: 998px; background: #777; }
```
